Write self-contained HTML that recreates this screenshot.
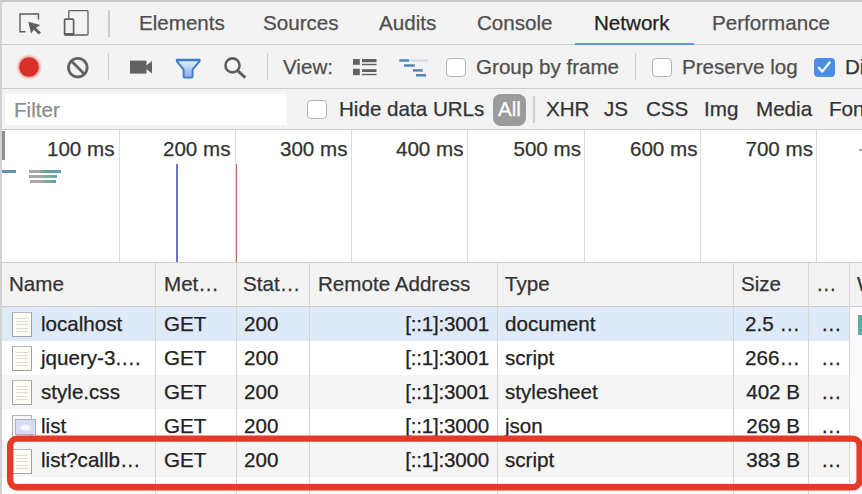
<!DOCTYPE html>
<html><head><meta charset="utf-8">
<style>
*{margin:0;padding:0;box-sizing:border-box}
html,body{width:862px;height:494px;overflow:hidden;background:#fff}
body{position:relative;font-family:"Liberation Sans",sans-serif;color:#303030}
.a{position:absolute}
.t{position:absolute;white-space:nowrap;-webkit-text-stroke:0.25px currentColor;font-size:20.6px;line-height:20px;height:20px}
.hl{position:absolute;height:1px;background:#cfcfcf}
.vl{position:absolute;width:1px;background:#d6d6d6}
.cb{position:absolute;width:20px;height:19px;border:1.3px solid #b3b3b3;border-radius:4px;background:#fff}
.g{color:#4f4f4f}
.r{text-align:right}
.ic{position:absolute;left:12px;width:20px;height:24.5px;border:1.3px solid #a3a3a3;border-top-color:#b8b8b8;background:#fdfdf6}
.ic::after{content:"";position:absolute;left:3px;top:4.5px;width:12px;height:14px;background:repeating-linear-gradient(180deg,#dcdcd4 0,#dcdcd4 1px,transparent 1px,transparent 3.2px)}
</style></head><body>

<!-- tab bar -->
<div class="a" style="left:0;top:0;width:862px;height:44px;background:#f3f3f3"></div>
<div class="a" style="left:0;top:0;width:862px;height:1.5px;background:#c6c6c6"></div>
<div class="hl" style="left:0;top:44px;width:862px;background:#cbcbcb"></div>
<div class="a" style="left:574.5px;top:43px;width:119px;height:2.5px;background:#5b9bdc"></div>

<div class="t g" style="left:139px;top:12.5px">Elements</div>
<div class="t g" style="left:263px;top:12.5px">Sources</div>
<div class="t g" style="left:379px;top:12.5px">Audits</div>
<div class="t g" style="left:477px;top:12.5px">Console</div>
<div class="t" style="left:594px;top:12.5px;color:#222">Network</div>
<div class="t g" style="left:712px;top:12.5px">Performance</div>
<div class="a" style="left:108px;top:10px;width:1.5px;height:27px;background:#cdcdcd"></div>

<!-- toolbar -->
<div class="a" style="left:0;top:45px;width:862px;height:43px;background:#f3f3f3"></div>
<div class="hl" style="left:0;top:88px;width:862px;background:#cbcbcb"></div>
<div class="a" style="left:107.5px;top:53px;width:1.5px;height:27px;background:#cdcdcd"></div>
<div class="a" style="left:266.5px;top:53px;width:1.5px;height:27px;background:#cdcdcd"></div>
<div class="t g" style="left:283px;top:57px">View:</div>
<div class="cb" style="left:446px;top:57.5px"></div>
<div class="t g" style="left:476px;top:57px">Group by frame</div>
<div class="a" style="left:634.5px;top:53px;width:1.5px;height:27px;background:#cdcdcd"></div>
<div class="cb" style="left:652px;top:57.5px"></div>
<div class="t g" style="left:682px;top:57px">Preserve log</div>
<div class="a" style="left:814px;top:57.5px;width:20.5px;height:19.5px;border-radius:4px;background:#4b8ee8"></div>
<div class="t" style="left:845px;top:57px;color:#333">Di</div>

<!-- filter bar -->
<div class="a" style="left:0;top:89px;width:862px;height:41px;background:#f3f3f3"></div>
<div class="hl" style="left:0;top:129px;width:862px;background:#cbcbcb"></div>
<div class="a" style="left:5px;top:94px;width:282px;height:31px;background:#fff;border-radius:2px"></div>
<div class="t" style="left:14px;top:100px;color:#8c8c8c">Filter</div>
<div class="cb" style="left:307px;top:100px"></div>
<div class="t" style="left:339px;top:99px;color:#333">Hide data URLs</div>
<div class="a" style="left:493px;top:93.5px;width:33px;height:32px;border-radius:8px;background:#9b9b9b"></div>
<div class="t" style="left:498px;top:99px;color:#fff">All</div>
<div class="a" style="left:533px;top:96px;width:1.5px;height:27px;background:#cdcdcd"></div>
<div class="t" style="left:546px;top:99px;color:#333">XHR</div>
<div class="t" style="left:604px;top:99px;color:#333">JS</div>
<div class="t" style="left:646px;top:99px;color:#333">CSS</div>
<div class="t" style="left:704px;top:99px;color:#333">Img</div>
<div class="t" style="left:756px;top:99px;color:#333">Media</div>
<div class="t" style="left:829px;top:99px;color:#333">Font</div>

<!-- overview -->
<div class="a" style="left:0;top:130px;width:862px;height:132px;background:#fff"></div>
<div class="hl" style="left:0;top:262px;width:862px;background:#cbcbcb"></div>
<div class="vl" style="left:118.5px;top:130px;height:132px;background:#dcdcdc"></div>
<div class="vl" style="left:234.5px;top:130px;height:132px;background:#dcdcdc"></div>
<div class="vl" style="left:350.5px;top:130px;height:132px;background:#dcdcdc"></div>
<div class="vl" style="left:467px;top:130px;height:132px;background:#dcdcdc"></div>
<div class="vl" style="left:583.5px;top:130px;height:132px;background:#dcdcdc"></div>
<div class="vl" style="left:700px;top:130px;height:132px;background:#dcdcdc"></div>
<div class="vl" style="left:816px;top:130px;height:132px;background:#dcdcdc"></div>
<div class="t r" style="left:14.5px;top:139px;width:100px;color:#333">100 ms</div>
<div class="t r" style="left:130.5px;top:139px;width:100px;color:#333">200 ms</div>
<div class="t r" style="left:247.5px;top:139px;width:100px;color:#333">300 ms</div>
<div class="t r" style="left:363.5px;top:139px;width:100px;color:#333">400 ms</div>
<div class="t r" style="left:481px;top:139px;width:100px;color:#333">500 ms</div>
<div class="t r" style="left:597.5px;top:139px;width:100px;color:#333">600 ms</div>
<div class="t r" style="left:713px;top:139px;width:100px;color:#333">700 ms</div>
<div class="a" style="left:859px;top:149px;width:3px;height:1.5px;background:#aaa"></div>
<div class="a" style="left:176px;top:163.5px;width:1.8px;height:98.5px;background:#6e76c8"></div>
<div class="a" style="left:235.5px;top:163.5px;width:1.8px;height:98.5px;background:#bf6a6a"></div>

<div class="a" style="left:2px;top:131px;width:3px;height:29px;background:#8e8e8e"></div>
<div class="a" style="left:1px;top:170px;width:15px;height:3px;background:#5e96ac"></div>
<div class="a" style="left:29px;top:170px;width:32px;height:3px;background:linear-gradient(90deg,#a5a5a5 0,#a5a5a5 30%,#6aa88a 45%,#5a9cc0 100%)"></div>
<div class="a" style="left:29px;top:175px;width:27.5px;height:2.5px;background:linear-gradient(90deg,#a8a8a8 0,#a8a8a8 40%,#7ab890 60%,#6a9eb0 100%)"></div>
<div class="a" style="left:29.5px;top:180px;width:26px;height:2.5px;background:linear-gradient(90deg,#a8a8a8 0,#a8a8a8 40%,#7aae98 60%,#6a98b0 100%)"></div>

<!-- table header -->
<div class="a" style="left:0;top:263px;width:862px;height:43px;background:#f3f3f3"></div>
<div class="a" style="left:0;top:306px;width:862px;height:1.5px;background:#cbcbcb"></div>

<!-- rows -->
<div class="a" style="left:0;top:307px;width:849px;height:34px;background:#deeaf8"></div>
<div class="a" style="left:0;top:341px;width:862px;height:34px;background:#fff"></div>
<div class="a" style="left:0;top:375px;width:862px;height:34px;background:#f5f5f5"></div>
<div class="a" style="left:0;top:409px;width:862px;height:34px;background:#fff"></div>
<div class="a" style="left:0;top:443px;width:862px;height:34px;background:#f5f5f5"></div>
<div class="a" style="left:0;top:477px;width:862px;height:34px;background:#fff"></div>


<div class="a" style="left:849px;top:307px;width:13px;height:187px;background:#fbfbfd"></div>
<!-- column borders -->
<div class="vl" style="left:155px;top:263px;height:231px"></div>
<div class="vl" style="left:236px;top:263px;height:231px"></div>
<div class="vl" style="left:309px;top:263px;height:231px"></div>
<div class="vl" style="left:497px;top:263px;height:231px"></div>
<div class="vl" style="left:733px;top:263px;height:231px"></div>
<div class="vl" style="left:808px;top:263px;height:231px"></div>
<div class="vl" style="left:848.5px;top:263px;height:231px"></div>

<div class="t" style="left:9px;top:274px;color:#333">Name</div>
<div class="t" style="left:164px;top:274px;color:#333">Met…</div>
<div class="t" style="left:243px;top:274px;color:#333">Stat…</div>
<div class="t" style="left:318px;top:274px;color:#333">Remote Address</div>
<div class="t" style="left:505px;top:274px;color:#333">Type</div>
<div class="t" style="left:741px;top:274px;color:#333">Size</div>
<div class="t" style="left:816px;top:274px;color:#333">…</div>
<div class="t" style="left:857px;top:274px;color:#333">W</div>

<!-- row content -->
<div class="ic" style="top:312px"></div>
<div class="ic" style="top:346px"></div>
<div class="ic" style="top:380px"></div>
<div class="a" style="left:12px;top:415px;width:20px;height:22px;border:1.3px solid #b4b4b4;background:#f6f6f8"></div>
<div class="a" style="left:15px;top:419px;width:20.5px;height:16px;border:1px solid #aab0c8;background:radial-gradient(ellipse 7px 4px at 50% 55%,#fff 0,#f4f6ff 50%,#d8dcf2 100%)"></div>
<div class="ic" style="top:449px"></div>

<div class="t" style="left:41px;top:314px;color:#222">localhost</div>
<div class="t" style="left:41px;top:348px;color:#222">jquery-3.…</div>
<div class="t" style="left:41px;top:382px;color:#222">style.css</div>
<div class="t" style="left:41px;top:416px;color:#222">list</div>
<div class="t" style="left:41px;top:450px;color:#222">list?callb…</div>

<div class="t" style="left:164px;top:314px;color:#222">GET</div>
<div class="t" style="left:164px;top:348px;color:#222">GET</div>
<div class="t" style="left:164px;top:382px;color:#222">GET</div>
<div class="t" style="left:164px;top:416px;color:#222">GET</div>
<div class="t" style="left:164px;top:450px;color:#222">GET</div>

<div class="t" style="left:244px;top:314px;color:#222">200</div>
<div class="t" style="left:244px;top:348px;color:#222">200</div>
<div class="t" style="left:244px;top:382px;color:#222">200</div>
<div class="t" style="left:244px;top:416px;color:#222">200</div>
<div class="t" style="left:244px;top:450px;color:#222">200</div>

<div class="t r" style="left:388px;width:101px;letter-spacing:-0.2px;top:314px;color:#222">[::1]:3001</div>
<div class="t r" style="left:388px;width:101px;letter-spacing:-0.2px;top:348px;color:#222">[::1]:3001</div>
<div class="t r" style="left:388px;width:101px;letter-spacing:-0.2px;top:382px;color:#222">[::1]:3001</div>
<div class="t r" style="left:388px;width:101px;letter-spacing:-0.2px;top:416px;color:#222">[::1]:3000</div>
<div class="t r" style="left:388px;width:101px;letter-spacing:-0.2px;top:450px;color:#222">[::1]:3000</div>

<div class="t" style="left:505px;top:314px;color:#222">document</div>
<div class="t" style="left:505px;top:348px;color:#222">script</div>
<div class="t" style="left:505px;top:382px;color:#222">stylesheet</div>
<div class="t" style="left:505px;top:416px;color:#222">json</div>
<div class="t" style="left:505px;top:450px;color:#222">script</div>

<div class="t r" style="left:700px;width:100px;top:314px;color:#222">2.5 …</div>
<div class="t r" style="left:700px;width:100px;top:348px;color:#222">266…</div>
<div class="t r" style="left:700px;width:100px;top:382px;color:#222">402 B</div>
<div class="t r" style="left:700px;width:100px;top:416px;color:#222">269 B</div>
<div class="t r" style="left:700px;width:100px;top:450px;color:#222">383 B</div>

<div class="t" style="left:821px;top:314px;color:#222">…</div>
<div class="t" style="left:821px;top:348px;color:#222">…</div>
<div class="t" style="left:821px;top:382px;color:#222">…</div>
<div class="t" style="left:821px;top:416px;color:#222">…</div>
<div class="t" style="left:821px;top:450px;color:#222">…</div>
<div class="a" style="left:858px;top:315px;width:4px;height:20px;background:#52b3a3"></div>

<div class="a" style="left:0;top:0;width:2px;height:494px;background:#d2d2d2"></div>
<!-- icons svg -->
<svg class="a" style="left:0;top:0" width="862" height="494" viewBox="0 0 862 494">
  <!-- inspect -->
  <path d="M38.5 19.5 V14 H20 V31.8 H25.5" fill="none" stroke="#5f5f5f" stroke-width="1.4"/>
  <path d="M28.3 21.7 L40.3 25 L36 27.8 L41 32.6 L38.8 34.6 L33.9 29.8 L31 33.6 Z" fill="#5f5f5f"/>
  <!-- device -->
  <rect x="68.8" y="10.6" width="19.2" height="24.4" rx="1.2" fill="none" stroke="#5f5f5f" stroke-width="1.3"/>
  <rect x="64.6" y="19.2" width="9" height="15.6" rx="0.8" fill="#f3f3f3" stroke="#5f5f5f" stroke-width="1.7"/>
  <rect x="64" y="33" width="10" height="2.2" fill="#5f5f5f"/>
  <!-- record -->
  <defs><radialGradient id="rg"><stop offset="0.75" stop-color="#f3a29c"/><stop offset="1" stop-color="#f3a29c" stop-opacity="0"/></radialGradient></defs><circle cx="29" cy="67" r="13" fill="url(#rg)"/>
  <circle cx="29" cy="67" r="9.8" fill="#d8302a"/>
  <!-- clear -->
  <circle cx="77.8" cy="67.6" r="9.3" fill="none" stroke="#636363" stroke-width="2.8"/>
  <path d="M71.3 61.1 L84.3 74.1" stroke="#636363" stroke-width="2.8"/>
  <!-- camera -->
  <rect x="130" y="60.6" width="16.5" height="13" fill="#626262"/>
  <path d="M145 66.5 L152 61 V73.5 L145 68 Z" fill="#626262"/>
  <!-- filter -->
  <defs><linearGradient id="fg" x1="0" y1="0" x2="0" y2="1"><stop offset="0" stop-color="#e6f4fb"/><stop offset="0.35" stop-color="#c4dcf6"/><stop offset="1" stop-color="#8ea6ee"/></linearGradient></defs>
  <path d="M176.8 59.6 H199.6 V61.2 L192.6 69.6 V76.2 Q192.6 77.6 191.2 77.6 H185 Q183.6 77.6 183.6 76.2 V69.6 L176.8 61.2 Z" fill="url(#fg)" stroke="#3e7cc6" stroke-width="1.9" stroke-linejoin="round"/>
  <path d="M177 60.2 H199.4" stroke="#3e7cc6" stroke-width="2.2"/>
  <!-- search -->
  <circle cx="232.5" cy="65.4" r="7" fill="none" stroke="#5f5f5f" stroke-width="2.6"/>
  <path d="M237.5 70.6 L245.4 77.6" stroke="#5f5f5f" stroke-width="3"/>
  <!-- list view -->
  <rect x="353" y="59" width="6.8" height="5.8" fill="#616161"/>
  <rect x="353" y="68.8" width="6.8" height="6.4" fill="#616161"/>
  <rect x="362" y="59" width="14.5" height="3.2" fill="#616161"/>
  <rect x="362" y="63.8" width="14.5" height="1.4" fill="#616161"/>
  <rect x="362" y="69.2" width="14.5" height="2.8" fill="#616161"/>
  <rect x="362" y="73.8" width="14.5" height="1.4" fill="#616161"/>
  <!-- waterfall -->
  <rect x="409" y="59.3" width="19" height="2.4" fill="#d9dce2"/>
  <rect x="399.3" y="59.3" width="9.7" height="2.4" fill="#4e80b8"/>
  <rect x="404" y="64.3" width="10.7" height="2.4" fill="#4e80b8"/>
  <rect x="413" y="69.2" width="9.8" height="2.4" fill="#4e80b8"/>
  <rect x="416" y="74.1" width="10" height="2.4" fill="#4e80b8"/>
  <!-- check -->
  <path d="M818.8 67.8 L822.2 71.6 L829.7 62.5" fill="none" stroke="#fff" stroke-width="2.2" stroke-linecap="round" stroke-linejoin="round"/>
  <!-- red highlight -->
  <rect x="10.2" y="438.6" width="849.4" height="48.6" rx="7" ry="7" fill="none" stroke="#e23b2b" stroke-width="6.4"/>
</svg>

</body></html>
